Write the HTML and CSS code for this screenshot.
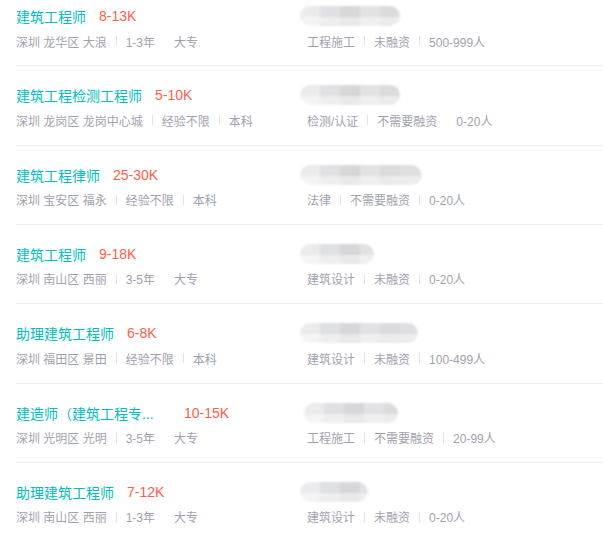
FILE: index.html
```html
<!DOCTYPE html>
<html lang="zh-CN">
<head>
  <meta charset="UTF-8">
  <title>职位列表</title>
  <link rel="stylesheet" href="styles.css">
</head>
<body>

  <ul class="job-list">
    <li class="job-item">
      <div class="job-primary">
        <div class="job-line"><span class="job-name">建筑工程师</span><span class="salary">8-13K</span></div>
        <div class="job-meta">深圳 龙华区 大浪<span class="sep"></span>1-3年<span class="sep blank"></span>大专</div>
      </div>
      <div class="company">
        <div class="company-line"><span class="blur-name" style="width: 100px"></span></div>
        <div class="job-meta">工程施工<span class="sep"></span>未融资<span class="sep"></span>500-999人</div>
      </div>
    </li>
    <li class="job-item">
      <div class="job-primary">
        <div class="job-line"><span class="job-name">建筑工程检测工程师</span><span class="salary">5-10K</span></div>
        <div class="job-meta">深圳 龙岗区 龙岗中心城<span class="sep"></span>经验不限<span class="sep"></span>本科</div>
      </div>
      <div class="company">
        <div class="company-line"><span class="blur-name" style="width: 100px"></span></div>
        <div class="job-meta">检测/认证<span class="sep"></span>不需要融资<span class="sep blank"></span>0-20人</div>
      </div>
    </li>
    <li class="job-item">
      <div class="job-primary">
        <div class="job-line"><span class="job-name">建筑工程律师</span><span class="salary">25-30K</span></div>
        <div class="job-meta">深圳 宝安区 福永<span class="sep"></span>经验不限<span class="sep"></span>本科</div>
      </div>
      <div class="company">
        <div class="company-line"><span class="blur-name" style="width: 122px"></span></div>
        <div class="job-meta">法律<span class="sep"></span>不需要融资<span class="sep"></span>0-20人</div>
      </div>
    </li>
    <li class="job-item">
      <div class="job-primary">
        <div class="job-line"><span class="job-name">建筑工程师</span><span class="salary">9-18K</span></div>
        <div class="job-meta">深圳 南山区 西丽<span class="sep"></span>3-5年<span class="sep blank"></span>大专</div>
      </div>
      <div class="company">
        <div class="company-line"><span class="blur-name" style="width: 74px"></span></div>
        <div class="job-meta">建筑设计<span class="sep"></span>未融资<span class="sep"></span>0-20人</div>
      </div>
    </li>
    <li class="job-item">
      <div class="job-primary">
        <div class="job-line"><span class="job-name">助理建筑工程师</span><span class="salary">6-8K</span></div>
        <div class="job-meta">深圳 福田区 景田<span class="sep"></span>经验不限<span class="sep"></span>本科</div>
      </div>
      <div class="company">
        <div class="company-line"><span class="blur-name" style="width: 118px"></span></div>
        <div class="job-meta">建筑设计<span class="sep"></span>未融资<span class="sep"></span>100-499人</div>
      </div>
    </li>
    <li class="job-item">
      <div class="job-primary">
        <div class="job-line"><span class="job-name long">建造师（建筑工程专...</span><span class="salary">10-15K</span></div>
        <div class="job-meta">深圳 光明区 光明<span class="sep"></span>3-5年<span class="sep blank"></span>大专</div>
      </div>
      <div class="company">
        <div class="company-line"><span class="blur-name shifted" style="width: 94px"></span></div>
        <div class="job-meta">工程施工<span class="sep"></span>不需要融资<span class="sep"></span>20-99人</div>
      </div>
    </li>
    <li class="job-item">
      <div class="job-primary">
        <div class="job-line"><span class="job-name">助理建筑工程师</span><span class="salary">7-12K</span></div>
        <div class="job-meta">深圳 南山区 西丽<span class="sep"></span>1-3年<span class="sep blank"></span>大专</div>
      </div>
      <div class="company">
        <div class="company-line"><span class="blur-name" style="width: 68px"></span></div>
        <div class="job-meta">建筑设计<span class="sep"></span>未融资<span class="sep"></span>0-20人</div>
      </div>
    </li>
  </ul>

</body>
</html>
```

FILE: styles.css
```css
body {
  margin: 0;
  font-family: "Liberation Sans", "Noto Sans CJK SC", sans-serif;
  background: #fff;
  overflow: hidden;
}

.job-list {
  list-style: none;
  margin: -13px 0 0 16px;
  padding: 0;
}

.job-item {
  display: flex;
  padding: 18px 0 14.33px;
  border-bottom: 1px solid #f0f0f2;
}

.job-primary {
  flex: 0 0 284px;
}

.company {
  flex: 1;
}

.job-line, .company-line {
  display: flex;
  align-items: center;
  height: 22px;
}

.job-name {
  font-size: 14px;
  color: #00bebd;
  white-space: nowrap;
}

.job-name.long {
  width: 155px;
}

.salary {
  margin-left: 13px;
  font-size: 14px;
  color: #fd6048;
  white-space: nowrap;
}

.job-meta {
  display: flex;
  align-items: center;
  margin-top: 4px;
  height: 20px;
  font-size: 12px;
  color: #9fa2ae;
  white-space: nowrap;
}

.company .job-meta {
  padding-left: 7px;
}

.sep {
  display: inline-block;
  width: 1px;
  height: 10px;
  margin: 0 9px 0 9px;
  background: #e3e3e6;
}

.sep.blank {
  background: transparent;
}

.blur-name {
  display: block;
  height: 20px;
  border-radius: 10px;
  background:
    linear-gradient(180deg, rgba(255, 255, 255, 0) 55%, rgba(255, 255, 255, 0.45) 55%),
    linear-gradient(90deg, #ebebed 0 20px, #dfe0e3 20px 40px, #d7d7da 40px 60px, #e2e2e5 60px 80px, #dbdbde 80px 100px, #dfdfe2 100px 120px, #e8e8ea 120px);
  filter: blur(1.2px);
}

.blur-name.shifted {
  margin-left: 4px;
}
```
